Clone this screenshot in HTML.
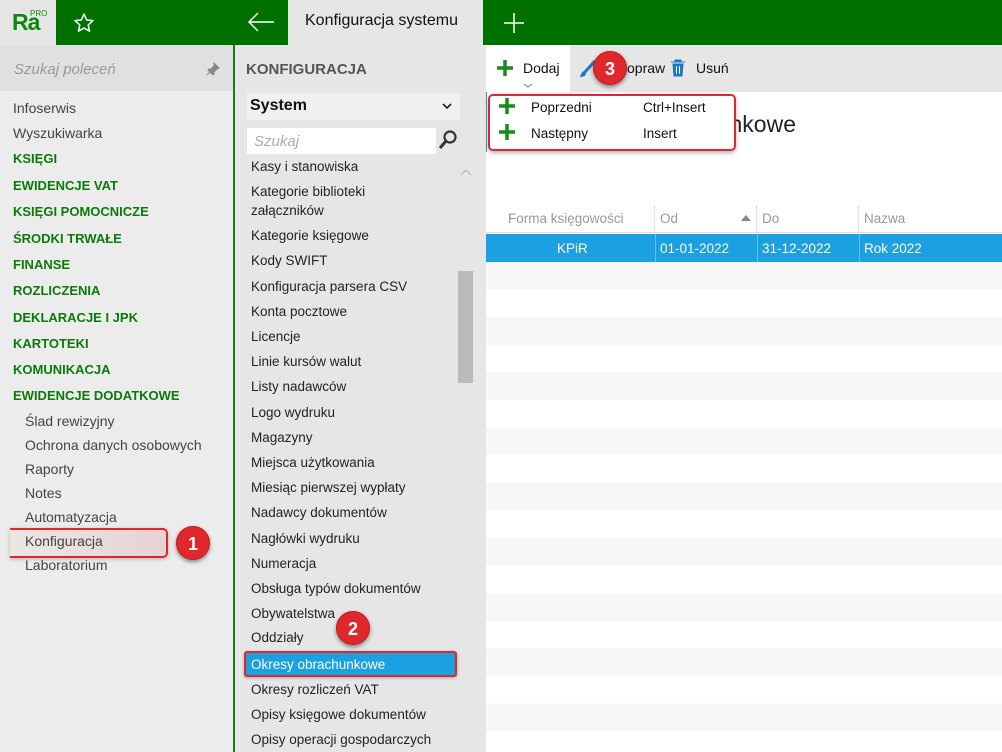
<!DOCTYPE html>
<html><head><meta charset="utf-8"><style>
*{margin:0;padding:0;box-sizing:border-box}
body{width:1002px;height:752px;overflow:hidden;position:relative;font-family:"Liberation Sans",sans-serif;background:#fff;color:#333}
.a{position:absolute;white-space:nowrap}
.l{font-size:14px;color:#444}
.g{font-size:13px;font-weight:bold;color:#0a7a0a}
.m{font-size:13.5px;color:#222}
.badge{position:absolute;width:34px;height:34px;border-radius:50%;background:#e0282c;color:#fff;font-weight:bold;font-size:18px;text-align:center;line-height:34px;box-shadow:0 2px 4px rgba(0,0,0,.45);border:1px solid #c01a1e}
</style></head><body>
<div class="a" style="left:0;top:0;width:1002px;height:45px;background:#007000"></div>
<div class="a" style="left:0;top:0;width:56px;height:45px;background:#e6e6e6"></div>
<div class="a" style="left:12px;top:9px;font-size:23px;font-weight:bold;color:#0a8a0a;letter-spacing:-1px">Ra</div>
<div class="a" style="left:30px;top:9px;font-size:8px;color:#0a8a0a">PRO</div>
<svg class="a" style="left:73px;top:12px" width="22" height="22" viewBox="0 0 22 22"><path d="M11 2l2.7 6 6.3.6-4.8 4.3 1.4 6.3L11 16l-5.6 3.2 1.4-6.3L2 8.6l6.3-.6z" fill="none" stroke="#fff" stroke-width="1.5" stroke-linejoin="round"/></svg>
<svg class="a" style="left:247px;top:12px" width="28" height="20"><path d="M2 10h25M11 1L2 10l9 9" fill="none" stroke="#fff" stroke-width="1.5"/></svg>
<div class="a" style="left:288px;top:0;width:195px;height:45px;background:#e6e6e6"></div>
<div class="a" style="left:305px;top:12px;font-size:16px;color:#111">Konfiguracja systemu</div>
<svg class="a" style="left:503px;top:12px" width="22" height="22"><path d="M11 1v20M1 11h20" stroke="#fff" stroke-width="1.5"/></svg>
<div class="a" style="left:0;top:45px;width:233px;height:707px;background:#ececec"></div>
<div class="a" style="left:0;top:45px;width:233px;height:46px;background:#e0e0e0"></div>
<div class="a" style="left:14px;top:61px;font-size:15px;font-style:italic;color:#999">Szukaj poleceń</div>
<svg class="a" style="left:206px;top:62px" width="14" height="14"><path d="M8 1l5 5-2 1-3 3 0 2-1 1-5-5 1-1h2l3-3z M4 10l-3 3" fill="#888" stroke="#888"/></svg>
<div class="a" style="left:233px;top:45px;width:2px;height:707px;background:#1a7a1a"></div>
<div class="a l" style="left:13px;top:100px">Infoserwis</div>
<div class="a l" style="left:13px;top:125px">Wyszukiwarka</div>
<div class="a g" style="left:13px;top:151px">KSIĘGI</div>
<div class="a g" style="left:13px;top:178px">EWIDENCJE VAT</div>
<div class="a g" style="left:13px;top:204px">KSIĘGI POMOCNICZE</div>
<div class="a g" style="left:13px;top:231px">ŚRODKI TRWAŁE</div>
<div class="a g" style="left:13px;top:257px">FINANSE</div>
<div class="a g" style="left:13px;top:283px">ROZLICZENIA</div>
<div class="a g" style="left:13px;top:310px">DEKLARACJE I JPK</div>
<div class="a g" style="left:13px;top:336px">KARTOTEKI</div>
<div class="a g" style="left:13px;top:362px">KOMUNIKACJA</div>
<div class="a g" style="left:13px;top:388px">EWIDENCJE DODATKOWE</div>
<div class="a l" style="left:25px;top:413px">Ślad rewizyjny</div>
<div class="a l" style="left:25px;top:437px">Ochrona danych osobowych</div>
<div class="a l" style="left:25px;top:461px">Raporty</div>
<div class="a l" style="left:25px;top:485px">Notes</div>
<div class="a l" style="left:25px;top:509px">Automatyzacja</div>
<div class="a" style="left:10px;top:528px;width:158px;height:30px;border:2px solid #e0282c;border-left:none;border-radius:0 5px 5px 0;background:linear-gradient(90deg,#ece6e6,#e6d3d3);box-shadow:0 1px 4px rgba(0,0,0,.25)"></div>
<div class="a l" style="left:25px;top:533px">Konfiguracja</div>
<div class="a l" style="left:25px;top:557px">Laboratorium</div>
<div class="badge" style="left:176px;top:526px">1</div>
<div class="a" style="left:235px;top:45px;width:250px;height:707px;background:#e6e6e6"></div>
<div class="a" style="left:246px;top:61px;font-size:15px;font-weight:bold;color:#555">KONFIGURACJA</div>
<div class="a" style="left:247px;top:93px;width:213px;height:27px;background:#f0f0f0"></div>
<div class="a" style="left:250px;top:97px;font-size:16px;font-weight:bold;color:#111">System</div>
<svg class="a" style="left:442px;top:103px" width="10" height="7"><path d="M1 1l4 4 4-4" fill="none" stroke="#222" stroke-width="1.6"/></svg>
<div class="a" style="left:247px;top:128px;width:189px;height:26px;background:#fff"></div>
<div class="a" style="left:254px;top:133px;font-size:15px;font-style:italic;color:#aaa">Szukaj</div>
<svg class="a" style="left:438px;top:129px" width="20" height="22"><circle cx="12" cy="8" r="5.5" fill="none" stroke="#333" stroke-width="2.2"/><path d="M8 12l-6 7" stroke="#333" stroke-width="3"/></svg>
<svg class="a" style="left:460px;top:168px" width="12" height="8"><path d="M1 7l5-5 5 5" fill="none" stroke="#bbb" stroke-width="1.3"/></svg>
<div class="a" style="left:458px;top:271px;width:15px;height:112px;background:#bbb"></div>
<div class="a m" style="left:251px;top:159px">Kasy i stanowiska</div>
<div class="a m" style="left:251px;top:184px">Kategorie biblioteki</div>
<div class="a m" style="left:251px;top:203px">załączników</div>
<div class="a m" style="left:251px;top:228px">Kategorie księgowe</div>
<div class="a m" style="left:251px;top:253px">Kody SWIFT</div>
<div class="a m" style="left:251px;top:279px">Konfiguracja parsera CSV</div>
<div class="a m" style="left:251px;top:304px">Konta pocztowe</div>
<div class="a m" style="left:251px;top:329px">Licencje</div>
<div class="a m" style="left:251px;top:354px">Linie kursów walut</div>
<div class="a m" style="left:251px;top:379px">Listy nadawców</div>
<div class="a m" style="left:251px;top:405px">Logo wydruku</div>
<div class="a m" style="left:251px;top:430px">Magazyny</div>
<div class="a m" style="left:251px;top:455px">Miejsca użytkowania</div>
<div class="a m" style="left:251px;top:480px">Miesiąc pierwszej wypłaty</div>
<div class="a m" style="left:251px;top:505px">Nadawcy dokumentów</div>
<div class="a m" style="left:251px;top:531px">Nagłówki wydruku</div>
<div class="a m" style="left:251px;top:556px">Numeracja</div>
<div class="a m" style="left:251px;top:581px">Obsługa typów dokumentów</div>
<div class="a m" style="left:251px;top:606px">Obywatelstwa</div>
<div class="a m" style="left:251px;top:630px">Oddziały</div>
<div class="a" style="left:244px;top:651px;width:213px;height:26px;background:#1ba1e2;border:2px solid #e0282c;border-radius:3px;box-shadow:0 1px 3px rgba(0,0,0,.3)"></div>
<div class="a m" style="left:251px;top:657px;color:#fff">Okresy obrachunkowe</div>
<div class="a m" style="left:251px;top:682px">Okresy rozliczeń VAT</div>
<div class="a m" style="left:251px;top:707px">Opisy księgowe dokumentów</div>
<div class="a m" style="left:251px;top:732px">Opisy operacji gospodarczych</div>
<div class="badge" style="left:336px;top:611px">2</div>
<div class="a" style="left:485px;top:45px;width:517px;height:47px;background:#e6e6e6"></div>
<div class="a" style="left:486px;top:45px;width:84px;height:47px;background:#fff"></div>
<svg class="a" style="left:497px;top:60px" width="16" height="16"><path d="M8 0v16M0 8h16" stroke="#1a8a1a" stroke-width="3.5"/></svg>
<div class="a" style="left:523px;top:60px;font-size:14px;color:#111">Dodaj</div>
<svg class="a" style="left:523px;top:83px" width="10" height="6"><path d="M1 1l4 3 4-3" fill="none" stroke="#777"/></svg>
<svg class="a" style="left:579px;top:60px" width="18" height="18"><path d="M16 1L6 12" stroke="#1b78c8" stroke-width="3"/><path d="M6 11c-3 0-4 3-5 6 3 0 6-1 6-4z" fill="#1b78c8"/></svg>
<div class="a" style="left:627px;top:60px;font-size:14px;color:#111">opraw</div>
<svg class="a" style="left:670px;top:59px" width="16" height="18"><path d="M1 3h14M5 3V1h6v2M3 5h10l-1 12H4z" fill="#1b78c8" stroke="#1b78c8"/><path d="M6.5 7v8M9.5 7v8" stroke="#fff"/></svg>
<div class="a" style="left:696px;top:60px;font-size:14px;color:#111">Usuń</div>
<div class="badge" style="left:593px;top:51px">3</div>
<div class="a" style="right:206px;top:111px;font-size:23px;color:#222">Okresy obrachunkowe</div>
<div class="a" style="left:486px;top:92px;width:1px;height:60px;background:#1ba1e2"></div>
<div class="a" style="left:488px;top:94px;width:248px;height:57px;background:#fff;border:2px solid #e0282c;border-radius:5px;box-shadow:0 2px 5px rgba(0,0,0,.3)"></div>
<svg class="a" style="left:499px;top:98px" width="16" height="16"><path d="M8 0v16M0 8h16" stroke="#1a8a1a" stroke-width="3.5"/></svg>
<svg class="a" style="left:499px;top:124px" width="16" height="16"><path d="M8 0v16M0 8h16" stroke="#1a8a1a" stroke-width="3.5"/></svg>
<div class="a" style="left:531px;top:100px;font-size:13.5px;color:#111">Poprzedni</div>
<div class="a" style="left:643px;top:100px;font-size:13.5px;color:#111">Ctrl+Insert</div>
<div class="a" style="left:531px;top:126px;font-size:13.5px;color:#111">Następny</div>
<div class="a" style="left:643px;top:126px;font-size:13.5px;color:#111">Insert</div>
<div class="a" style="left:486px;top:205px;width:516px;height:28px;background:#fff;border-bottom:1px solid #ddd"></div>
<div class="a" style="left:508px;top:211px;font-size:13.5px;color:#999">Forma księgowości</div>
<div class="a" style="left:654px;top:206px;height:26px;border-left:1px dotted #ccc"></div>
<div class="a" style="left:660px;top:211px;font-size:13.5px;color:#999">Od</div>
<svg class="a" style="left:741px;top:215px" width="10" height="6"><path d="M0 6L5 0l5 6z" fill="#888"/></svg>
<div class="a" style="left:756px;top:206px;height:26px;border-left:1px dotted #ccc"></div>
<div class="a" style="left:762px;top:211px;font-size:13.5px;color:#999">Do</div>
<div class="a" style="left:858px;top:206px;height:26px;border-left:1px dotted #ccc"></div>
<div class="a" style="left:864px;top:211px;font-size:13.5px;color:#999">Nazwa</div>
<div class="a" style="left:486px;top:234px;width:516px;height:28px;background:#1ba1e2"></div>
<div class="a" style="left:655px;top:234px;width:1px;height:28px;background:#5fc0ee"></div>
<div class="a" style="left:757px;top:234px;width:1px;height:28px;background:#5fc0ee"></div>
<div class="a" style="left:859px;top:234px;width:1px;height:28px;background:#5fc0ee"></div>
<div class="a" style="left:557px;top:241px;font-size:13.5px;color:#fff">KPiR</div>
<div class="a" style="left:660px;top:241px;font-size:13.5px;color:#fff">01-01-2022</div>
<div class="a" style="left:762px;top:241px;font-size:13.5px;color:#fff">31-12-2022</div>
<div class="a" style="left:864px;top:241px;font-size:13.5px;color:#fff">Rok 2022</div>
<div class="a" style="left:486px;top:262px;width:516px;height:490px;background:repeating-linear-gradient(#f7f7f7 0,#f7f7f7 27.6px,#fff 27.6px,#fff 55.2px)"></div>
<div class="a" style="left:485px;top:92px;width:1px;height:660px;background:#e6e6e6"></div>
</body></html>
